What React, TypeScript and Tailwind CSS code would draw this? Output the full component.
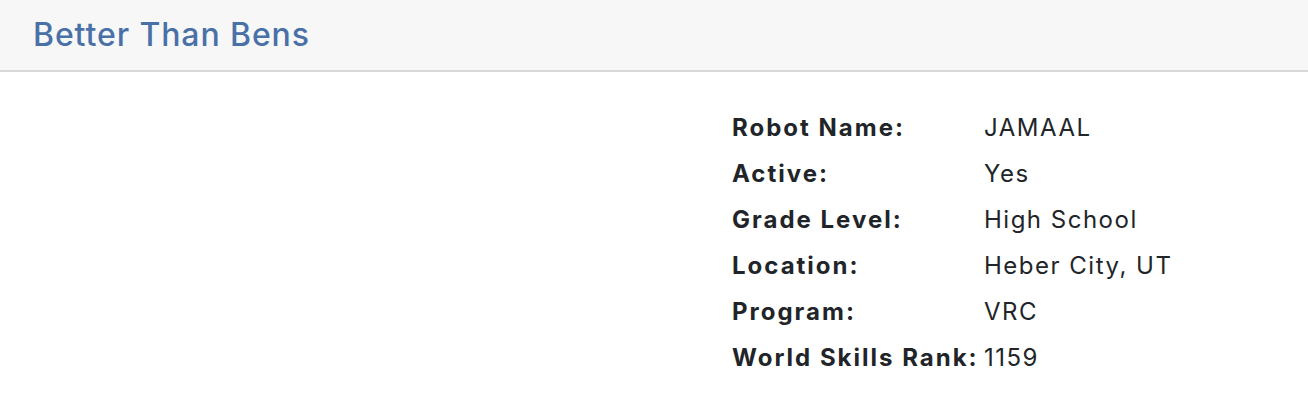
import React from 'react';

const details = [
   { label: 'Robot Name:', value: 'JAMAAL' },
   { label: 'Active:', value: 'Yes' },
   { label: 'Grade Level:', value: 'High School' },
   { label: 'Location:', value: 'Heber City, UT' },
   { label: 'Program:', value: 'VRC' },
   { label: 'World Skills Rank:', value: '1159' },
];

const App: React.FC = () => {
   return (
      <div className="w-[1308px] h-[410px] bg-white overflow-hidden font-['Inter',sans-serif] text-[#212529]">
         {/* Header */}
         <div className="h-[72px] bg-[#f7f7f7] border-b-2 border-[#d9d9d9] flex items-center px-[33px]">
            <h1 className="text-[32px] leading-none font-medium text-[#4a70a8] tracking-[0.9px]">Better Than Bens</h1>
         </div>

         {/* Team details */}
         <div className="flex pt-[33px] pl-[732px]">
            <div className="grid grid-cols-[252px_auto]">
               {details.map((d) => (
                  <React.Fragment key={d.label}>
                     <div className="text-[24px] leading-[46px] font-bold tracking-[2px] whitespace-nowrap">{d.label}</div>
                     <div className="text-[24px] leading-[46px] tracking-[1.5px]">{d.value}</div>
                  </React.Fragment>
               ))}
            </div>
         </div>
      </div>
   );
};

export default App;
